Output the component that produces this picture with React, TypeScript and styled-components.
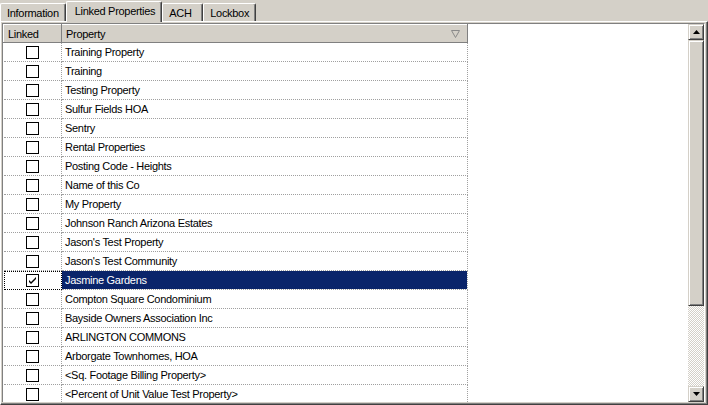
import React from 'react';
import styled, { createGlobalStyle } from 'styled-components';

const GlobalStyle = createGlobalStyle`
  html, body {
    margin: 0;
    padding: 0;
    background: #d4d0c8;
  }
  body {
    font-family: Tahoma, "Liberation Sans", "DejaVu Sans", sans-serif;
    font-size: 11px;
    letter-spacing: -0.3px;
    color: #000;
  }
`;

const Window = styled.div`
  width: 708px;
  height: 405px;
  display: flex;
  flex-direction: column;
  overflow: hidden;
  background: #d4d0c8;
`;

const TabStrip = styled.div`
  display: flex;
  align-items: flex-end;
  height: 21px;
  position: relative;
  z-index: 1;
`;

const Tab = styled.div<{ $active?: boolean; $min?: number }>`
  height: ${p => (p.$active ? '21px' : '18px')};
  min-width: ${p => p.$min ?? 0}px;
  box-sizing: border-box;
  padding: ${p => (p.$active ? '2px 6px 0 8px' : '2px 6px 0 6px')};
  margin-bottom: ${p => (p.$active ? '-1px' : '0')};
  border-top: 1px solid #fff;
  border-left: 1px solid #fff;
  border-right: 1px solid #404040;
  box-shadow: inset -1px 0 0 #808080;
  border-radius: 2px 2px 0 0;
  background: #d4d0c8;
  white-space: nowrap;
  line-height: 14px;
`;

const Panel = styled.div`
  flex: 1;
  display: flex;
  border-top: 1px solid #fff;
  border-left: 1px solid #fff;
  border-right: 1px solid #404040;
  border-bottom: 1px solid #404040;
  box-shadow: inset -1px -1px 0 #808080;
  padding: 1px 2px 2px 1px;
  min-height: 0;
`;

const Inner = styled.div`
  flex: 1;
  display: flex;
  border-top: 1px solid #808080;
  border-left: 1px solid #808080;
  border-right: 1px solid #fff;
  min-height: 0;
  background: #fff;
`;

const GridArea = styled.div`
  flex: 1;
  overflow: hidden;
  background: #fff;
`;

const Table = styled.table`
  border-collapse: collapse;
  table-layout: fixed;
  width: 464px;
`;

const HeadCell = styled.th<{ $w: number }>`
  width: ${p => p.$w}px;
  height: 18px;
  box-sizing: border-box;
  padding: 0 0 0 4px;
  text-align: left;
  font-weight: normal;
  background: #d4d0c8;
  border-top: 1px solid #fff;
  border-left: 1px solid #fff;
  border-right: 1px solid #808080;
  border-bottom: 1px solid #808080;
  position: relative;
`;

const FilterIcon = styled.svg`
  position: absolute;
  right: 7px;
  top: 5px;
`;

const Row = styled.tr``;

const CheckCell = styled.td<{ $focus?: boolean }>`
  height: 18px;
  padding: 0;
  text-align: center;
  border-bottom: 1px dotted #a0a0a0;
  border-right: 1px dotted #a0a0a0;
  ${p => (p.$focus ? 'outline: 1px dotted #000; outline-offset: -1px;' : '')}
`;

const NameCell = styled.td<{ $selected?: boolean }>`
  height: 18px;
  padding: 0 0 0 3px;
  white-space: nowrap;
  overflow: hidden;
  border-bottom: 1px dotted #a0a0a0;
  border-right: 1px dotted #a0a0a0;
  background: ${p => (p.$selected ? '#0a246a' : '#fff')};
  color: ${p => (p.$selected ? '#fff' : '#000')};
`;

const Box = styled.span`
  display: inline-flex;
  align-items: center;
  justify-content: center;
  width: 11px;
  height: 11px;
  border: 1px solid #000;
  background: #fff;
  vertical-align: middle;
`;

const ScrollBar = styled.div`
  width: 16px;
  display: flex;
  flex-direction: column;
  background-color: #e8e6e0;
  background-image: repeating-conic-gradient(#d4d0c8 0% 25%, #ffffff 0% 50%);
  background-size: 2px 2px;
`;

const ScrollButton = styled.div`
  height: 16px;
  box-sizing: border-box;
  background: #d4d0c8;
  border-top: 1px solid #d4d0c8;
  border-left: 1px solid #d4d0c8;
  border-right: 1px solid #404040;
  border-bottom: 1px solid #404040;
  box-shadow: inset 1px 1px 0 #fff, inset -1px -1px 0 #808080;
  display: flex;
  align-items: center;
  justify-content: center;
`;

const Thumb = styled.div<{ $h: number }>`
  height: ${p => p.$h}px;
  box-sizing: border-box;
  background: #d4d0c8;
  border-top: 1px solid #d4d0c8;
  border-left: 1px solid #d4d0c8;
  border-right: 1px solid #404040;
  border-bottom: 1px solid #404040;
  box-shadow: inset 1px 1px 0 #fff, inset -1px -1px 0 #808080;
`;

const Track = styled.div`
  flex: 1;
`;

const properties = [
  'Training Property',
  'Training',
  'Testing Property',
  'Sulfur Fields HOA',
  'Sentry',
  'Rental Properties',
  'Posting Code - Heights',
  'Name of this Co',
  'My Property',
  'Johnson Ranch Arizona Estates',
  "Jason's Test Property",
  "Jason's Test Community",
  'Jasmine Gardens',
  'Compton  Square Condominium',
  'Bayside Owners Association Inc',
  'ARLINGTON COMMONS',
  'Arborgate Townhomes, HOA',
  '<Sq. Footage Billing Property>',
  '<Percent of Unit Value Test Property>',
];

const selected = 'Jasmine Gardens';

export default function App() {
  return (
    <Window>
      <GlobalStyle />
      <TabStrip>
        <Tab>Information</Tab>
        <Tab $active>Linked Properties</Tab>
        <Tab $min={41}>ACH</Tab>
        <Tab>Lockbox</Tab>
      </TabStrip>
      <Panel>
        <Inner>
          <GridArea>
            <Table>
              <thead>
                <tr>
                  <HeadCell $w={58}>Linked</HeadCell>
                  <HeadCell $w={406}>
                    Property
                    <FilterIcon width="9" height="8" viewBox="0 0 9 8">
                      <path d="M0.5 0.5 H8.5 L4.5 7.5 Z" fill="none" stroke="#8a8a8a" />
                    </FilterIcon>
                  </HeadCell>
                </tr>
              </thead>
              <tbody>
                {properties.map(name => {
                  const isSel = name === selected;
                  return (
                    <Row key={name}>
                      <CheckCell $focus={isSel}>
                        <Box>
                          {isSel && (
                            <svg width="9" height="9" viewBox="0 0 9 9">
                              <path d="M1 4 L3 6 L8 1 L8 3 L3 8 L1 6 Z" fill="#000" />
                            </svg>
                          )}
                        </Box>
                      </CheckCell>
                      <NameCell $selected={isSel}>{name}</NameCell>
                    </Row>
                  );
                })}
              </tbody>
            </Table>
          </GridArea>
          <ScrollBar>
            <ScrollButton>
              <svg width="7" height="4" viewBox="0 0 7 4">
                <path d="M3.5 0 L7 4 H0 Z" fill="#000" />
              </svg>
            </ScrollButton>
            <Thumb $h={266} />
            <Track />
            <ScrollButton>
              <svg width="7" height="4" viewBox="0 0 7 4">
                <path d="M0 0 H7 L3.5 4 Z" fill="#000" />
              </svg>
            </ScrollButton>
          </ScrollBar>
        </Inner>
      </Panel>
    </Window>
  );
}
